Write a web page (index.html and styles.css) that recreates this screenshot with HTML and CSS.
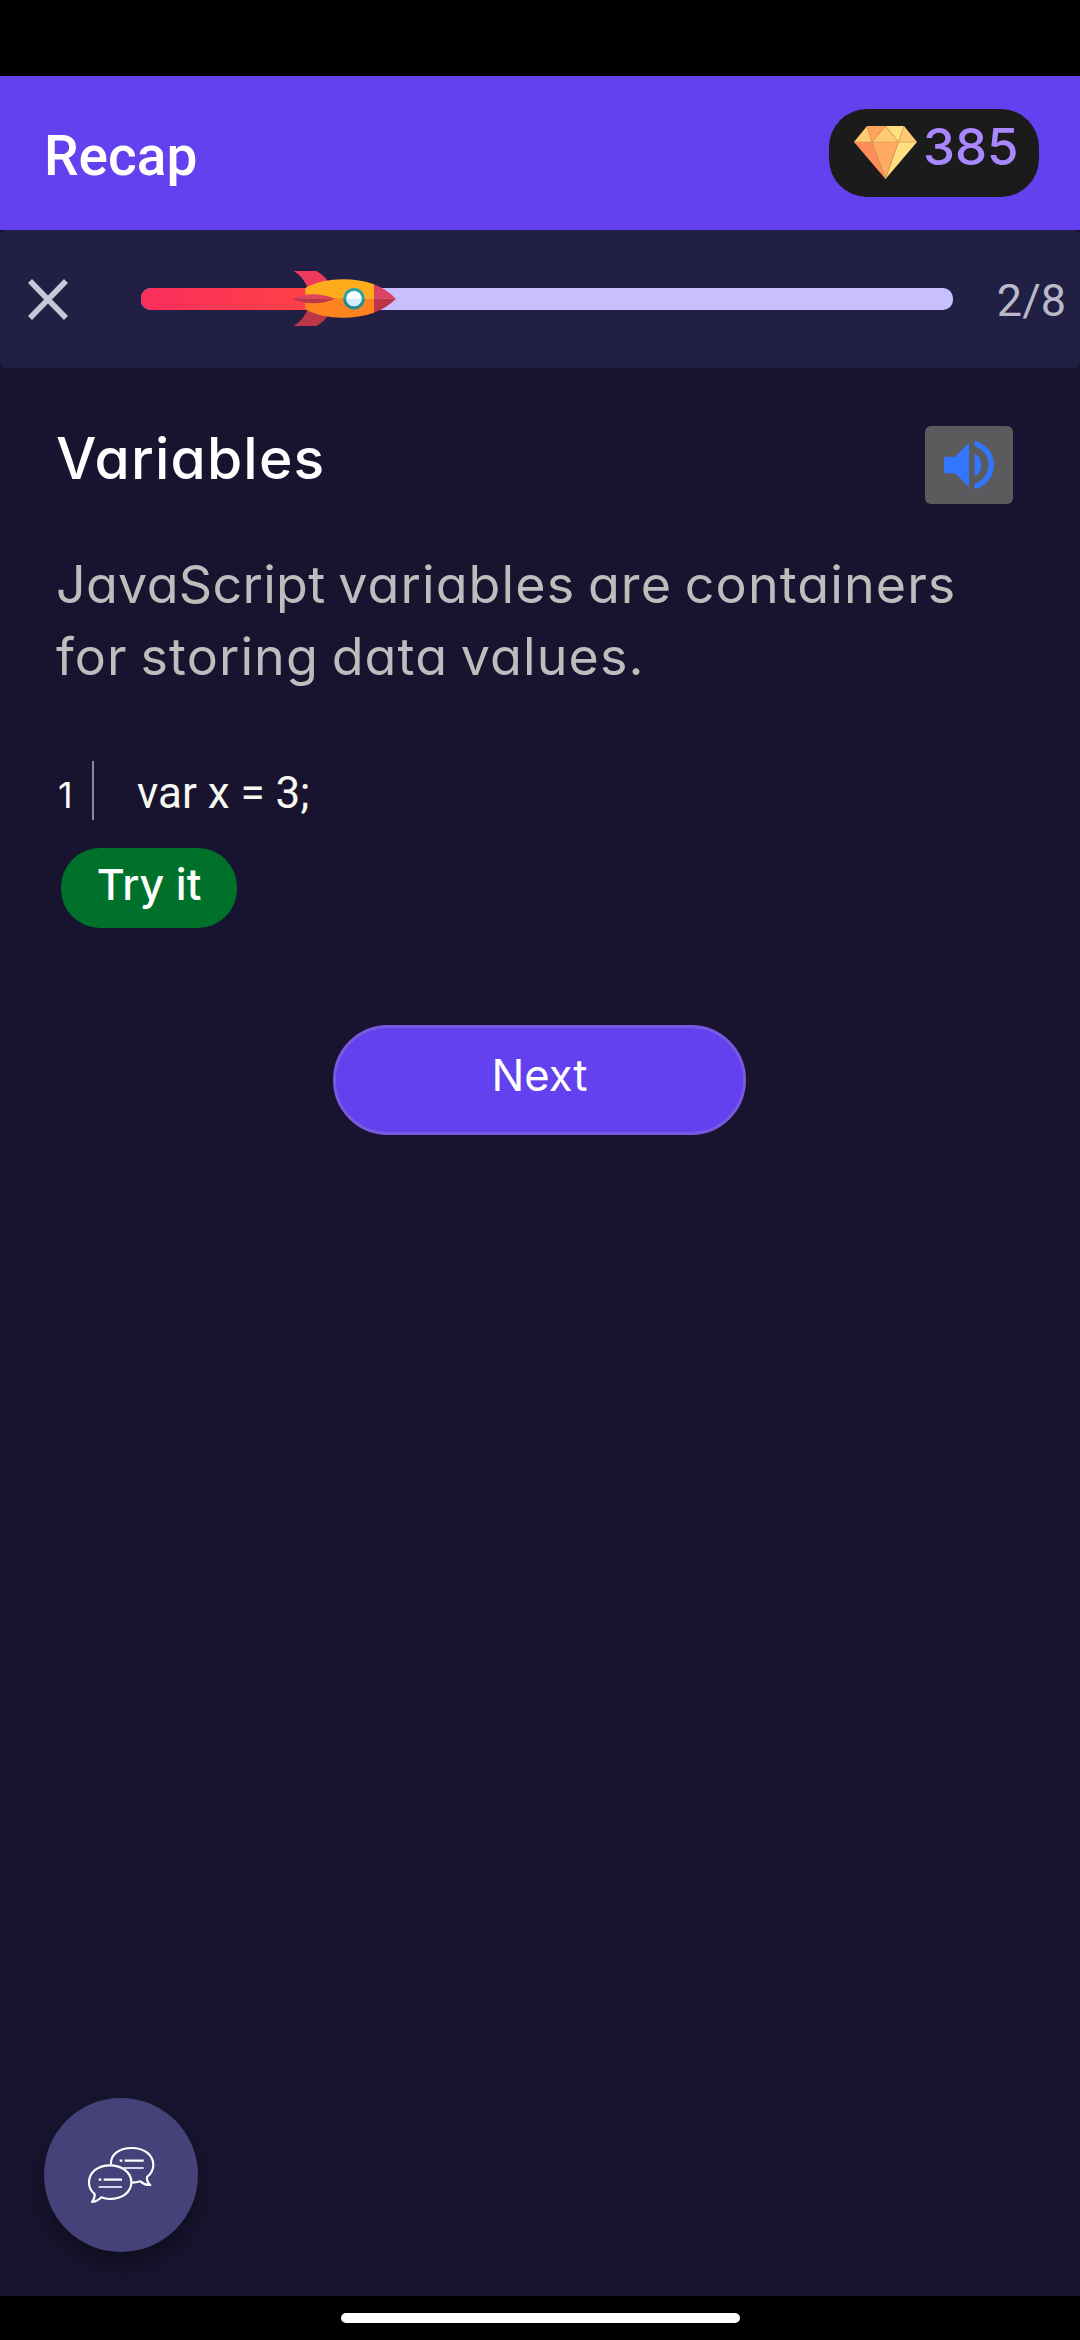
FILE: index.html
```html
<!DOCTYPE html>
<html lang="en">
<head>
<meta charset="utf-8">
<title>Recap</title>
<link rel="stylesheet" href="styles.css">
</head>
<body>
<div class="screen">
  <div class="status-bar"></div>
  <header class="app-bar">
    <h1 class="app-title">Recap</h1>
    <div class="gems">
      <svg class="gem" viewBox="0 0 63 53">
        <path fill="#ffa45f" d="M13 0H31.500L18 16z"/>
        <path fill="#ffca72" d="M13 0L18 16H0zM31.500 0L44.500 16H18zM50 0L63 16H44.500z"/>
        <path fill="#ffe07f" d="M31.500 0H50L44.500 16z"/>
        <path fill="#ff8d5a" d="M0 16H18L31.500 53z"/>
        <path fill="#ffa963" d="M18 16H44.500L31.500 53z"/>
        <path fill="#ffdf80" d="M44.500 16H63L31.500 53z"/>
        <path fill="none" stroke="#d99a55" stroke-width=".7" d="M0 16H63M13 0L18 16L31.500 0L44.500 16L50 0M18 16L31.500 53L44.500 16"/>
      </svg>
      <span>385</span>
    </div>
  </header>
  <section class="progress-panel">
    <svg class="close" viewBox="0 0 40 41"><path d="M2 2L38 39M38 2L2 39" fill="none" stroke="#c5c8d6" stroke-width="5.600"/></svg>
    <div class="track">
      <div class="fill"></div>
      <svg class="rocket" viewBox="67 63 312 165">
        <path fill="#ee3a5b" d="M72 63H140Q164 76 176 96L116 120Q104 82 72 63z"/>
        <path fill="#bd3548" d="M72 228H140Q164 215 176 195L116 171Q104 209 72 228z"/>
        <path fill="#ffac1c" d="M107 114C165 82 250 81 313 103V146H107z"/>
        <path fill="#ff8420" d="M107 178C165 210 250 210 313 188V146H107z"/>
        <path fill="#dc4360" d="M313 103Q352 119 379 146H313z"/>
        <path fill="#bd3548" d="M313 188Q352 173 379 146H313z"/>
        <path fill="#dc4360" d="M67 146Q130 119 197 146z"/>
        <path fill="#bd3548" d="M67 146Q130 173 197 146z"/>
        <circle cx="253" cy="146" r="32" fill="#2aa4a5"/>
        <path fill="#218c91" d="M221 146A32 32 0 0 0 285 146z"/>
        <circle cx="253" cy="146" r="23" fill="#fff"/>
        <path fill="#d1ecfa" d="M230 146A23 23 0 0 0 276 146z"/>
      </svg>
    </div>
    <div class="count">2/8</div>
  </section>
  <main class="lesson">
    <div class="heading-row">
      <h2 class="heading">Variables</h2>
      <button class="speak" aria-label="Listen">
        <svg viewBox="3 3 18 18" fill="#3276ff"><path d="M3 9v6h4l5 5V4L7 9H3zm13.500 3A4.500 4.500 0 0 0 14 7.970v8.050A4.500 4.500 0 0 0 16.500 12zM14 3.230v2.060a7 7 0 0 1 0 13.420v2.060a9 9 0 0 0 0-17.540z"/></svg>
      </button>
    </div>
    <p class="copy"><span class="term">JavaScript</span> variables are containers<br>for storing data values.</p>
    <div class="code">
      <span class="line-number">1</span>
      <span class="divider"></span>
      <code class="source">var x = 3;</code>
    </div>
    <button class="try">Try it</button>
    <button class="next">Next</button>
  </main>
  <footer class="nav-bar"><div class="home"></div></footer>
  <button class="chat" aria-label="Chat">
    <svg viewBox="33 30 210 180" fill="none" stroke="#fff" stroke-width="6.500" stroke-linejoin="round">
      <path d="M108 88C106 56 136 39 170 39C207 39 235 60 235 89C235 105 227 117 216 126C215 137 218 144 226 150C213 151 205 147 196 139Q184 143 171 143"/>
      <path d="M104 91C141 91 169 112 169 142C169 172 141 192 105 192Q90 192 79 187C71 195 63 201 51 201C58 192 60 186 59 177C47 168 42 157 42 142C42 113 68 91 104 91z"/>
      <path d="M134 77H142M149 77H206M71 134H79M86 134H141"/>
      <path stroke="#d5d5ee" d="M145 99H206M71 156H141"/>
    </svg>
  </button>
</div>
</body>
</html>
```

FILE: styles.css
```css
* { box-sizing: border-box; margin: 0; padding: 0; }

body {
  background: #000;
  color: #fff;
  font-family: Inter, "Liberation Sans", sans-serif;
  font-feature-settings: "cv11";
}

button { border: 0; color: inherit; font: inherit; font-feature-settings: inherit; }

svg { display: block; }

.screen {
  position: relative;
  display: flex;
  flex-direction: column;
  width: 1080px;
  height: 2340px;
  background: #18142f;
  overflow: hidden;
}

.status-bar { height: 76px; background: #000; }

.app-bar {
  display: flex;
  justify-content: space-between;
  height: 154px;
  padding: 33px 41px 0 44px;
  background: #6341ee;
}

.app-title {
  padding-top: 11px;
  font: 500 55px/72px Roboto, sans-serif;
}

.gems {
  display: flex;
  gap: 6px;
  width: 210px;
  height: 88px;
  padding-left: 25px;
  border-radius: 38px;
  background: #1c1b1c;
  color: #a987ff;
  font-size: 51px;
  font-weight: 500;
  line-height: 75px;
}

.gem { width: 63px; height: 53px; margin-top: 17px; }

.progress-panel {
  display: flex;
  align-items: center;
  height: 138px;
  padding: 0 14px 0 28px;
  border-radius: 6px;
  background: #221f45;
}

.close { width: 40px; height: 41px; margin-right: 73px; }

.track {
  position: relative;
  width: 812px;
  height: 22px;
  border-radius: 10px;
  background: #c8bfff;
}

.fill {
  width: 203px;
  height: 22px;
  border-radius: 10px 0 0 10px;
  background: linear-gradient(90deg, #fa2e5c, #ff4542);
}

.rocket {
  position: absolute;
  left: 151px;
  top: -17px;
  width: 104px;
  height: 55px;
}

.count {
  flex: 1;
  padding-top: 3px;
  color: #bbb9c9;
  font: 400 45px/60px Roboto, sans-serif;
  text-align: right;
}

.lesson {
  display: flex;
  flex: 1;
  flex-direction: column;
  padding: 58px 67px 0 56px;
}

.heading-row { display: flex; justify-content: space-between; height: 78px; }

.heading {
  font-size: 57px;
  font-weight: 500;
  line-height: 66px;
  letter-spacing: 1.2px;
}

.speak {
  display: grid;
  place-items: center;
  width: 88px;
  height: 78px;
  border-radius: 6px;
  background: #5b5a5c;
}

.speak svg { width: 50px; height: 50px; }

.copy {
  margin-top: 45px;
  color: #bebdbe;
  font-size: 52px;
  line-height: 72px;
  letter-spacing: 1.1px;
  word-spacing: -3px;
  white-space: nowrap;
}

.term { letter-spacing: .3px; }

.code {
  display: flex;
  align-items: baseline;
  height: 59px;
  margin-top: 68px;
  line-height: 64px;
}

.line-number { width: 36px; padding-left: 2px; font-size: 36px; }

.divider { align-self: stretch; width: 2px; margin-right: 43px; background: #8b8997; }

.source { color: #f8f8f2; font: 400 44px/64px Roboto, sans-serif; }

.try {
  align-self: flex-start;
  width: 176px;
  height: 80px;
  margin: 28px 0 0 5px;
  padding-bottom: 7px;
  border-radius: 39px;
  background: #00712b;
  font-size: 43px;
  font-weight: 500;
  line-height: 73px;
}

.next {
  width: 413px;
  height: 110px;
  margin: 97px 0 0 277px;
  padding-bottom: 10px;
  border: 3px solid #7959df;
  border-radius: 55px;
  background: #6341ee;
  font-size: 43.5px;
  line-height: 94px;
}

.nav-bar {
  display: flex;
  justify-content: center;
  height: 44px;
  padding-top: 17px;
  background: #000;
}

.home { width: 399px; height: 10px; border-radius: 5px; background: #fff; }

.chat {
  position: absolute;
  left: 44px;
  bottom: 88px;
  display: grid;
  place-items: center;
  width: 154px;
  height: 154px;
  border-radius: 50%;
  background: #454179;
  box-shadow: 0 12px 24px rgba(0, 0, 0, .35);
}

.chat svg { width: 70px; height: 60px; }
```
